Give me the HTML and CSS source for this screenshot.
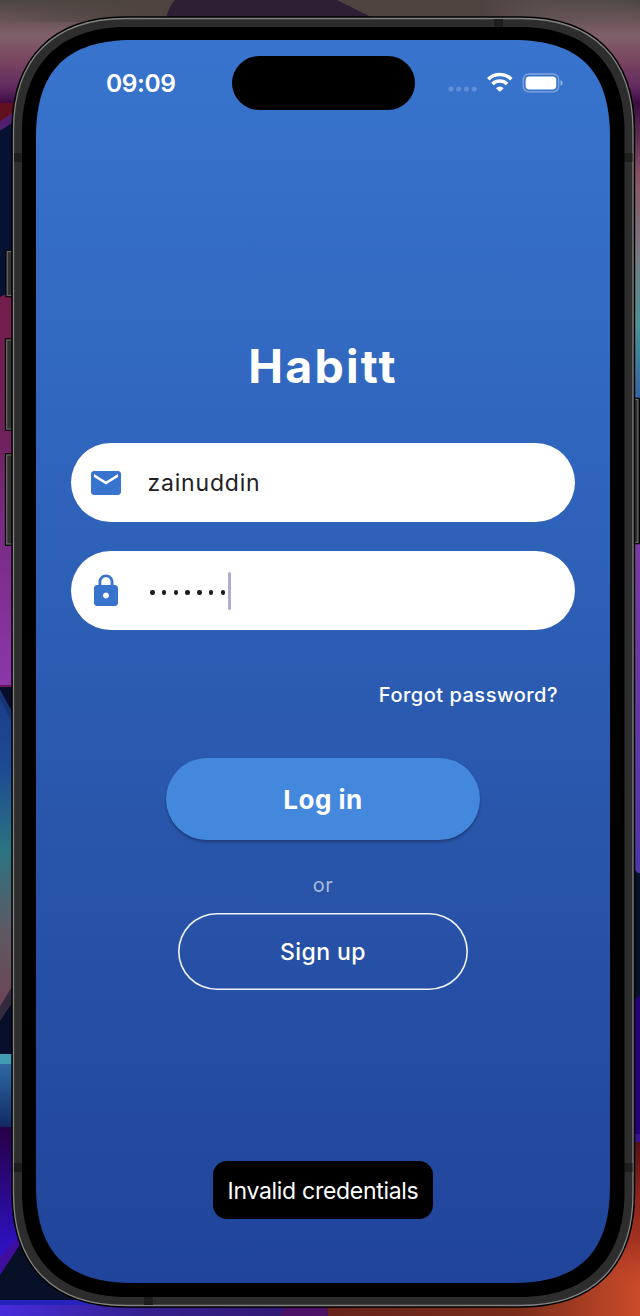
FILE: index.html
```html
<!DOCTYPE html>
<html lang="en">
<head>
<meta charset="utf-8">
<title>Habitt</title>
<link rel="stylesheet" href="styles.css">
</head>
<body>
<div class="stage">
  <svg class="device" viewBox="0 0 640 1316" width="640" height="1316" aria-hidden="true">
    <defs>
      <linearGradient id="topLeft" x1="0" y1="0" x2="0" y2="1"><stop offset="0" stop-color="#4d4642"/><stop offset=".35" stop-color="#80606a"/><stop offset=".6" stop-color="#784460"/><stop offset=".85" stop-color="#612a60"/><stop offset="1" stop-color="#3e0b45"/></linearGradient>
      <linearGradient id="topBand" x1="0" y1="0" x2="1" y2="0"><stop offset="0" stop-color="#4a443f" stop-opacity="0"/><stop offset=".22" stop-color="#4f443f"/><stop offset=".75" stop-color="#4f4340"/><stop offset="1" stop-color="#70636a" stop-opacity="0"/></linearGradient>
      <linearGradient id="rightUp" x1="0" y1="0" x2="0" y2="1"><stop offset="0" stop-color="#3b0d40"/><stop offset=".25" stop-color="#895365"/><stop offset=".5" stop-color="#77777d"/><stop offset=".75" stop-color="#4a9296"/><stop offset="1" stop-color="#3263a1"/></linearGradient>
      <linearGradient id="leftPink" x1="0" y1="0" x2="0" y2="1"><stop offset="0" stop-color="#741d4b"/><stop offset=".35" stop-color="#6e2159"/><stop offset=".6" stop-color="#782b83"/><stop offset="1" stop-color="#8b37a9"/></linearGradient>
      <linearGradient id="leftTeal" x1="0" y1="0" x2="0" y2="1"><stop offset="0" stop-color="#1b3d8a"/><stop offset=".25" stop-color="#1e4b91"/><stop offset=".5" stop-color="#2b7481"/><stop offset=".75" stop-color="#5d5963"/><stop offset="1" stop-color="#6e4354"/></linearGradient>
      <linearGradient id="leftBlue" x1="0" y1="0" x2="0" y2="1"><stop offset="0" stop-color="#2f69a5"/><stop offset="1" stop-color="#112a63"/></linearGradient>
      <linearGradient id="leftViolet" x1="0" y1="0" x2="0" y2="1"><stop offset="0" stop-color="#270047"/><stop offset=".6" stop-color="#2b0da0"/><stop offset="1" stop-color="#3216d8"/></linearGradient>
      <linearGradient id="bottomBand" x1="0" y1="0" x2="1" y2="0"><stop offset="0" stop-color="#472bdc"/><stop offset=".45" stop-color="#35208d"/><stop offset="1" stop-color="#30176d"/></linearGradient>
      <linearGradient id="red" x1="0" y1="0" x2="1" y2="0"><stop offset="0" stop-color="#66221b"/><stop offset=".6" stop-color="#782c1a"/><stop offset="1" stop-color="#cb4b2a"/></linearGradient>
      <linearGradient id="rightRed" x1="0" y1="0" x2="0" y2="1"><stop offset="0" stop-color="#541015"/><stop offset=".3" stop-color="#84211c"/><stop offset=".65" stop-color="#a2311f"/><stop offset="1" stop-color="#bd4527" stop-opacity="0"/></linearGradient>
      <linearGradient id="rightPurple" x1="0" y1="0" x2="0" y2="1"><stop offset="0" stop-color="#7b3aa1"/><stop offset="1" stop-color="#4d36a8"/></linearGradient>
    </defs>

    <!-- wallpaper -->
    <rect width="640" height="1316" fill="#070e29"/>
    <rect width="640" height="103" fill="url(#topLeft)"/>
    <rect width="640" height="22" fill="url(#topBand)"/>
    <path d="M166 18Q169 6 175 0H337L373 18Z" fill="#2f1f35"/>
    <rect y="103" width="40" height="20" fill="#62101f"/>
    <path d="M0 121L14 112V122L0 131Z" fill="#50206e"/>
    <path d="M0 131L14 122V300H0Z" fill="#061231"/>
    <path d="M0 297L12 291V687H0Z" fill="url(#leftPink)"/>
    <rect y="685" width="12" height="2" fill="#6b175c"/>
    <path d="M0 690L12 712V987L0 1010Z" fill="url(#leftTeal)"/>
    <path d="M0 690L12 712V722L0 699Z" fill="#173474"/>
    <path d="M0 1006L12 987V1003L0 1021Z" fill="#342a3e"/>
    <rect y="1054" width="12" height="10" fill="#439ab3"/>
    <rect y="1064" width="12" height="63" fill="url(#leftBlue)"/>
    <path d="M0 1127H13V1200L40 1260L0 1275Z" fill="url(#leftViolet)"/>
    <path d="M0 1257L20 1236L24 1244L0 1274Z" fill="#400e9d"/>
    <path d="M0 1275L21 1243L100 1300H0Z" fill="#081027"/>
    <rect y="1300" width="320" height="16" fill="url(#bottomBand)"/>
    <rect y="1300" width="110" height="5" fill="#2522bd"/>
    <path d="M290 1300H326L328 1316H280Z" fill="#4c1165"/>
    <path d="M326 1300H500L626 1200V1142H640V1316H328Z" fill="url(#red)"/>
    <rect x="628" y="103" width="12" height="296" fill="url(#rightUp)"/>
    <rect x="632" y="543" width="8" height="330" fill="url(#rightPurple)"/>
    <path d="M634 869L640 875V995L634 1001Z" fill="#061027"/>
    <path d="M634 1001L640 995V1142H634Z" fill="#250078"/>
    <rect x="634" y="1134" width="6" height="8" fill="#39158b"/>
    <rect x="610" y="1142" width="30" height="150" fill="url(#rightRed)"/>

    <!-- side buttons -->
    <g fill="#303130" stroke="#000" stroke-width="3.600">
      <rect x="7.200" y="251.500" width="10" height="44"/><rect x="6.700" y="340" width="10" height="89"/><rect x="6.700" y="455" width="10" height="89"/><rect x="630" y="399.500" width="8" height="143"/>
    </g>
    <g fill="#303130" stroke="#666765" stroke-width="1.300">
      <rect x="7.200" y="251.500" width="10" height="44"/><rect x="6.700" y="340" width="10" height="89"/><rect x="6.700" y="455" width="10" height="89"/><rect x="630" y="399.500" width="8" height="143"/>
    </g>

    <!-- shell -->
    <path d="M13.500 130.500C13.500 58.500 53.500 18.500 125.500 18.500H521C593 18.500 633 58.500 633 130.500V1193.500C633 1265.500 593 1305.500 521 1305.500H125.500C53.500 1305.500 13.500 1265.500 13.500 1193.500Z" fill="#2d2d2d" stroke="#000" stroke-width="4.400"/>
    <path d="M13.500 130.500C13.500 58.500 53.500 18.500 125.500 18.500H521C593 18.500 633 58.500 633 130.500V1193.500C633 1265.500 593 1305.500 521 1305.500H125.500C53.500 1305.500 13.500 1265.500 13.500 1193.500Z" fill="#2d2d2d" stroke="#848583" stroke-width="1.300"/>
    <g fill="#1e1e1e"><rect x="14" y="153" width="8" height="9"/><rect x="624.500" y="153" width="8" height="9"/><rect x="14" y="1163" width="8" height="9"/><rect x="624.500" y="1163" width="8" height="9"/><rect x="494" y="19" width="9" height="8"/><rect x="144" y="1297" width="9" height="8"/></g>
    <path d="M22 132C22 66 58 27 127 27H519.500C588.500 27 624.500 66 624.500 132V1192C624.500 1258 588.500 1297 519.500 1297H127C58 1297 22 1258 22 1192Z" fill="#000"/>
    <clipPath id="screenShape"><path d="M0 97C0 30.600 30.600 0 97 0H477C543.400 0 574 30.600 574 97V1146C574 1212.400 543.400 1243 477 1243H97C30.600 1243 0 1212.400 0 1146Z"/></clipPath>
  </svg>

  <main class="screen">
    <header class="status">
      <span class="time">09:09</span>
      <span class="island"></span>
      <svg class="indicators" viewBox="0 0 118 26" width="118" height="26">
        <g fill="#fff" fill-opacity=".2"><rect x="1.500" y="16.500" width="5" height="5" rx="2"/><rect x="9.200" y="16.500" width="5" height="5" rx="2"/><rect x="17" y="16.500" width="5" height="5" rx="2"/><rect x="24.700" y="16.500" width="5" height="5" rx="2"/></g>
        <g fill="none" stroke="#fff" stroke-width="3.600"><path d="M41.300 9.200A16.500 16.500 0 0 1 64.300 9.200"/><path d="M45.500 14A10.500 10.500 0 0 1 60.100 14"/></g>
        <path d="M49 18.200A5.300 5.300 0 0 1 56.600 18.200L53.500 21.300Q52.800 21.900 52.100 21.300Z" fill="#fff"/>
        <rect x="76.300" y="4" width="35.400" height="17.800" rx="5.500" fill="none" stroke="#fff" stroke-opacity=".38" stroke-width="1.300"/>
        <rect x="78.600" y="6.400" width="30.700" height="13" rx="3.600" fill="#fff"/>
        <path d="M113.500 9.900Q115.800 10.700 115.800 12.900T113.500 15.900Z" fill="#fff" fill-opacity=".45"/>
      </svg>
    </header>

    <h1 class="title">Habitt</h1>

    <form class="form">
      <label class="field">
        <svg class="field-icon" viewBox="0 0 24 24"><path d="M20 4H4c-1.100 0-1.990.9-1.990 2L2 18c0 1.100.9 2 2 2h16c1.100 0 2-.9 2-2V6c0-1.100-.9-2-2-2zm0 4l-8 5-8-5V6l8 5 8-5v2z"/></svg>
        <span class="value">zainuddin</span>
      </label>
      <label class="field">
        <svg class="field-icon" viewBox="0 0 24 24"><path d="M18 8h-1V6c0-2.760-2.240-5-5-5S7 3.240 7 6v2H6c-1.100 0-2 .9-2 2v10c0 1.100.9 2 2 2h12c1.100 0 2-.9 2-2V10c0-1.100-.9-2-2-2zm-6 9c-1.100 0-2-.9-2-2s.9-2 2-2 2 .9 2 2-.9 2-2 2zm3.100-9H8.900V6c0-1.710 1.390-3.100 3.100-3.100 1.710 0 3.100 1.390 3.100 3.100v2z"/></svg>
        <span class="dots"><i></i><i></i><i></i><i></i><i></i><i></i><i></i></span><span class="caret"></span>
      </label>
    </form>

    <a class="forgot">Forgot password?</a>
    <div class="login"><span>Log in</span></div>
    <span class="or">or</span>
    <div class="signup"><span>Sign up</span></div>
    <div class="toast"><span>Invalid credentials</span></div>
  </main>
</div>
</body>
</html>
```
FILE: styles.css
```css
* { box-sizing: border-box; }

body {
  margin: 0;
  background: #000;
  font-family: Inter, "Liberation Sans", sans-serif;
  color: #fff;
}

.stage {
  position: relative;
  width: 640px;
  height: 1316px;
  padding: 40px 30px 33px 36px;
  overflow: hidden;
}

.device {
  position: absolute;
  inset: 0;
}

.screen {
  position: relative;
  display: flex;
  flex-direction: column;
  align-items: center;
  width: 574px;
  height: 1243px;
  background: linear-gradient(#3874cd 0%, #3065bd 33%, #2854a9 67%, #20449b 100%);
  clip-path: url(#screenShape);
  white-space: nowrap;
}

.status {
  display: flex;
  align-items: center;
  width: 100%;
  height: 54px;
  margin-top: 16px;
}

.time {
  width: 125.5px;
  margin-left: 70px;
  font-size: 24.5px;
  line-height: 30px;
  font-weight: 600;
  letter-spacing: -0.4px;
}

.island {
  width: 183px;
  height: 54px;
  border-radius: 27px;
  background: #000;
}

.indicators { margin-left: 32px; }

.title {
  margin: 226px 0 0;
  height: 60px;
  line-height: 60px;
  font-size: 46.5px;
  font-weight: 650;
  letter-spacing: 2.2px;
}

.form {
  display: flex;
  flex-direction: column;
  gap: 29px;
  margin-top: 47px;
}

.field {
  display: flex;
  align-items: center;
  width: 504px;
  height: 79px;
  padding-left: 17px;
  border-radius: 40px;
  background: #fff;
  color: #202124;
}

.field-icon {
  width: 36px;
  height: 36px;
  margin-right: 23.5px;
  fill: #3874cd;
}

.value {
  padding-top: 1px;
  font-size: 23px;
  line-height: 30px;
  letter-spacing: 0.8px;
}

.dots {
  display: flex;
  gap: 7.25px;
  padding: 4px 0 0 2.5px;
}

.dots i {
  width: 4.5px;
  height: 4.5px;
  border-radius: 50%;
  background: #1c1b20;
}

.caret {
  width: 3px;
  height: 38px;
  margin-left: 2.5px;
  border-radius: 1.5px;
  background: #b3a9d3;
}

.forgot {
  align-self: flex-end;
  margin: 50px 52px 0 0;
  font-size: 20px;
  line-height: 30px;
  font-weight: 500;
  letter-spacing: 0.5px;
}

.login, .signup, .toast {
  display: flex;
  align-items: center;
  justify-content: center;
}

.login {
  width: 314px;
  height: 82px;
  margin-top: 48px;
  border-radius: 41px;
  background: #4488de;
  box-shadow: 0 2px 3px rgba(0, 0, 0, 0.3);
  font-size: 26px;
  font-weight: 650;
  letter-spacing: 0.5px;
}

.or {
  margin-top: 29.5px;
  font-size: 20px;
  line-height: 30px;
  color: #a9badd;
  letter-spacing: 0.5px;
}

.signup {
  width: 290px;
  height: 77px;
  margin-top: 13.5px;
  box-shadow: inset 0 0 0 1.6px #eef2f9;
  border-radius: 39px;
  font-size: 23px;
  font-weight: 500;
  letter-spacing: 0.45px;
}

.toast {
  width: 220px;
  height: 58px;
  margin-top: 171px;
  padding-top: 1px;
  border-radius: 14px;
  background: #000;
  font-size: 23px;
  letter-spacing: -0.3px;
}
```
